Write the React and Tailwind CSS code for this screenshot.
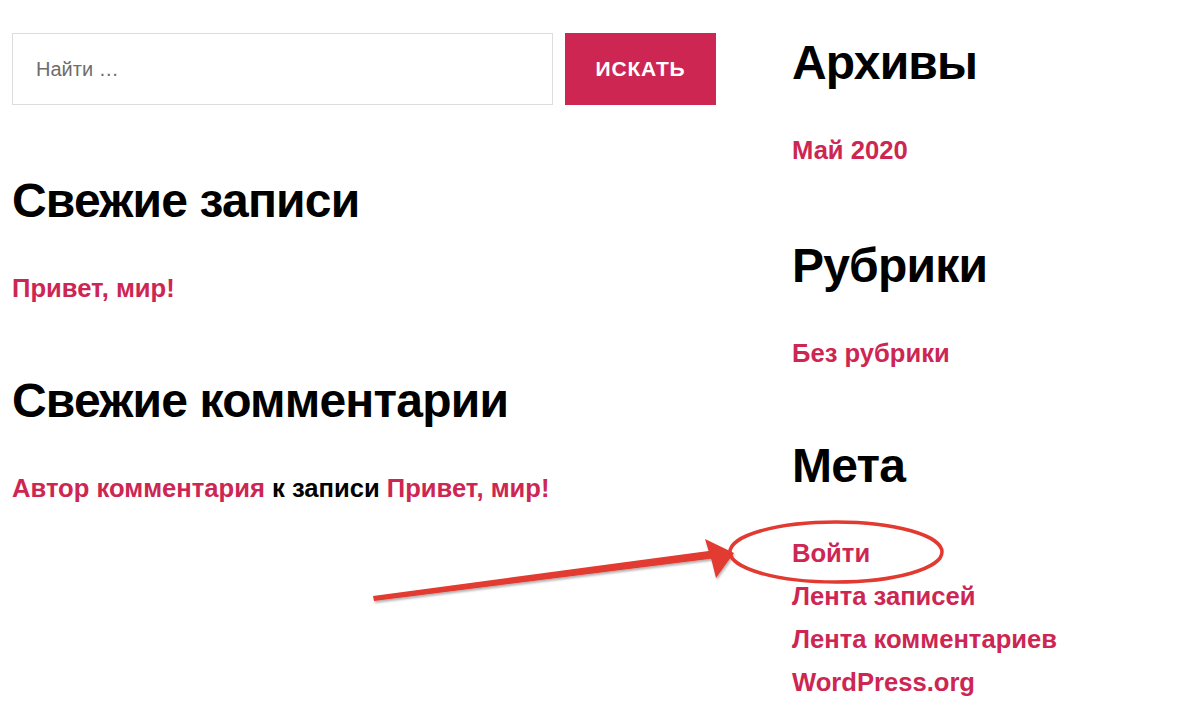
import React from 'react'

const font = { fontFamily: '"Liberation Sans", Arial, sans-serif' }

function Heading({ children, className = '' }) {
  return <h2 className={'text-[48px] leading-[48px] font-bold tracking-[-0.8px] text-black ' + className}>{children}</h2>
}

function Link({ children, className = '' }) {
  return <a href="#" className={'block text-[25.6px] leading-[25px] font-bold text-[#cd2653] ' + className}>{children}</a>
}

function Annotation() {
  // red arrow pointing at "Войти" plus the circle around it
  return (
    <svg className="absolute left-0 top-0 pointer-events-none" width="1200" height="709" viewBox="0 0 1200 709">
      <defs>
        <filter id="sh" x="-10%" y="-50%" width="120%" height="200%">
          <feDropShadow dx="1" dy="2" stdDeviation="1" floodColor="#000" floodOpacity="0.3" />
        </filter>
      </defs>
      <g filter="url(#sh)" fill="#e23a30">
        <path d="M373 596 L716 550 L717 558 L374 601 Z" />
        <path d="M705 539 L734 553 L716 578 L712 562 Z" />
      </g>
      <ellipse cx="836" cy="552" rx="106" ry="30" fill="none" stroke="#e23a30" strokeWidth="3.5" />
    </svg>
  )
}

export default function App() {
  return (
    <div className="relative w-[1200px] h-[709px] bg-white overflow-hidden" style={font}>
      <div className="flex pl-[12px]">
        <div className="w-[704px] pt-[33px]">
          <form className="flex gap-[12px] h-[72px]" onSubmit={e => e.preventDefault()}>
            <input
              type="search"
              placeholder="Найти …"
              className="w-[541px] h-full border border-[#dcdcdc] pl-[23px] text-[20px] text-black placeholder:text-[#6d6d6d] outline-none"
            />
            <button className="w-[151px] h-full bg-[#cd2653] text-white text-[21px] font-bold tracking-[0.8px] uppercase">
              Искать
            </button>
          </form>
          <Heading className="mt-[72px]">Свежие записи</Heading>
          <Link className="mt-[51px]">Привет, мир!</Link>
          <Heading className="mt-[76px]">Свежие комментарии</Heading>
          <p className="mt-[51px] text-[25.6px] leading-[25px] font-bold text-black">
            <a href="#" className="text-[#cd2653]">Автор комментария</a> к записи{' '}
            <a href="#" className="text-[#cd2653]">Привет, мир!</a>
          </p>
        </div>
        <div className="ml-[76px] pt-[39px]">
          <Heading>Архивы</Heading>
          <Link className="mt-[51px]">Май 2020</Link>
          <Heading className="mt-[79px]">Рубрики</Heading>
          <Link className="mt-[51px]">Без рубрики</Link>
          <Heading className="mt-[76px]">Мета</Heading>
          <div className="mt-[51px] flex flex-col gap-[18px]">
            <Link>Войти</Link>
            <Link>Лента записей</Link>
            <Link>Лента комментариев</Link>
            <Link>WordPress.org</Link>
          </div>
        </div>
      </div>
      <Annotation />
    </div>
  )
}
